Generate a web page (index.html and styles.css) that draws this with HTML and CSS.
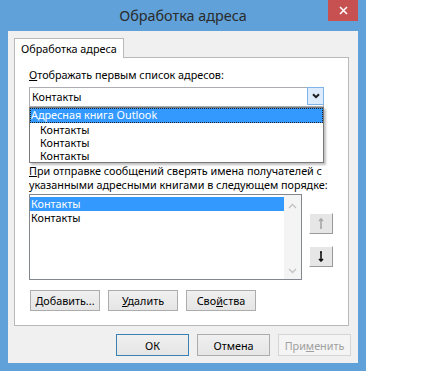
FILE: index.html
```html
<!DOCTYPE html>
<html lang="ru">
<head>
    <meta charset="UTF-8">
    <title>Обработка адреса</title>
    <link rel="stylesheet" href="styles.css">
</head>
<body>
    <div class="window">
        <div class="titlebar">
            <span></span>
            <div class="title">Обработка адреса</div>
            <button class="close" type="button">
                <svg width="9" height="9" viewBox="0 0 9 9"><path d="M1 1L8 8M8 1L1 8" stroke="#fff" stroke-width="1.6"/></svg>
            </button>
        </div>

        <div class="client">
            <div class="tabs">
                <div class="tab active">Обработка адреса</div>
            </div>

            <div class="panel">
                <div class="label"><u>О</u>тображать первым список адресов:</div>

                <div class="combo-wrap">
                    <div class="combo">
                        <span class="combo-text">Контакты</span>
                        <span class="combo-btn">
                            <svg width="8" height="6" viewBox="0 0 8 6"><path d="M1 1.2L4 4.2L7 1.2" fill="none" stroke="#1e1e1e" stroke-width="2"/></svg>
                        </span>
                    </div>
                    <ul class="dropdown">
                        <li class="group selected">Адресная книга Outlook</li>
                        <li>Контакты</li>
                        <li>Контакты</li>
                        <li>Контакты</li>
                    </ul>
                </div>

                <div class="text"><u>П</u>ри отправке сообщений сверять имена получателей с указанными адресными книгами в следующем порядке:</div>

                <div class="order">
                    <div class="listbox">
                        <ul class="items">
                            <li class="selected">Контакты</li>
                            <li>Контакты</li>
                        </ul>
                        <div class="scrollbar">
                            <svg width="9" height="6" viewBox="0 0 9 6"><path d="M1 5L4.5 1.5L8 5" fill="none" stroke="#c2c2c2" stroke-width="1.3"/></svg>
                            <svg width="9" height="6" viewBox="0 0 9 6"><path d="M1 1L4.5 4.5L8 1" fill="none" stroke="#c2c2c2" stroke-width="1.3"/></svg>
                        </div>
                    </div>
                    <div class="movers">
                        <button class="mover" type="button" disabled>
                            <svg width="8" height="11" viewBox="0 0 8 11"><path d="M4 1V10M2 3L4 1L6 3M3 10H5" fill="none" stroke="#a8a8a8" stroke-width="1.6"/></svg>
                        </button>
                        <button class="mover" type="button">
                            <svg width="8" height="11" viewBox="0 0 8 11"><path d="M4 1V10M3 1H5M2 8L4 10L6 8" fill="none" stroke="#111" stroke-width="1.6"/></svg>
                        </button>
                    </div>
                </div>

                <div class="actions">
                    <button class="btn" type="button"><u>Д</u>обавить...</button>
                    <button class="btn" type="button"><u>У</u>далить</button>
                    <button class="btn" type="button">Сво<u>й</u>ства</button>
                </div>
            </div>

            <div class="footer">
                <button class="btn btn-default" type="button">ОК</button>
                <button class="btn" type="button">Отмена</button>
                <button class="btn" type="button" disabled>При<u>м</u>енить</button>
            </div>
        </div>
    </div>
</body>
</html>
```

FILE: styles.css
```css
* {
    margin: 0;
    padding: 0;
    box-sizing: border-box;
}

body {
    background: #fff;
    font-family: 'Noto Sans', 'Open Sans', sans-serif;
    font-size: 10.8px;
    color: #000;
}

ul {
    list-style: none;
}

u {
    text-decoration: underline;
    text-underline-offset: 1px;
}

.window {
    width: 366px;
    height: 371px;
    background: #5fa1d8;
    padding: 0 8px 8px;
}

.titlebar {
    height: 31px;
    display: grid;
    grid-template-columns: 1fr auto 1fr;
    margin: 0 -8px;
    padding: 0 8px;
}

.title {
    align-self: center;
    font-size: 14.4px;
    color: #2b2b2b;
    padding-bottom: 1px;
}

.close {
    justify-self: end;
    align-self: start;
    width: 30px;
    height: 21px;
    border: none;
    background: #c75050;
    display: flex;
    align-items: center;
    justify-content: center;
}

.client {
    height: 332px;
    background: #f0f0f0;
    padding: 7px 0 0 6px;
}

.tabs {
    display: flex;
    position: relative;
    z-index: 1;
}

.tab {
    height: 20px;
    width: 110px;
    margin-bottom: -1px;
    padding: 1px 0 0 6px;
    border: 1px solid #b9b9b9;
    border-bottom: none;
    background: #fff;
    line-height: 17px;
    white-space: nowrap;
}

.panel {
    width: 335px;
    height: 269px;
    background: #fff;
    border: 1px solid #b9b9b9;
    padding: 10px 14px 0;
}

.label {
    line-height: 14px;
}

.combo-wrap {
    position: relative;
    margin-top: 5px;
    width: 295px;
}

.combo {
    height: 20px;
    border: 1px solid #abadb3;
    display: flex;
    align-items: stretch;
    background: #fff;
}

.combo-text {
    flex: 1;
    padding-left: 2px;
    line-height: 17px;
}

.combo-btn {
    width: 17px;
    margin: -1px -1px 1px 0;
    border: 1px solid #7eb4ea;
    background: #dcecfc;
    display: flex;
    align-items: center;
    justify-content: center;
}

.dropdown {
    position: absolute;
    top: 100%;
    left: 0;
    width: 295px;
    height: 56px;
    background: #fff;
    border: 1px solid #7a7a7a;
    box-shadow: 2px 2px 2px rgba(0, 0, 0, 0.25);
    z-index: 2;
}

.dropdown li {
    height: 13px;
    line-height: 13px;
    padding-left: 10px;
}

.dropdown .group {
    padding-left: 1px;
}

.dropdown .selected {
    background: #3399ff;
    color: #fff;
    outline: 1px dotted #222;
    outline-offset: -1px;
    height: 15px;
    line-height: 14px;
}

.text {
    margin-top: 57px;
    line-height: 14px;
}

.order {
    display: flex;
    gap: 7px;
    margin-top: 2px;
}

.listbox {
    width: 273px;
    height: 86px;
    border: 1px solid #828790;
    display: flex;
    background: #fff;
}

.items {
    flex: 1;
    padding-top: 2px;
}

.items li {
    height: 14px;
    line-height: 14px;
    padding-left: 1px;
}

.items .selected {
    background: #3399ff;
    color: #fff;
}

.scrollbar {
    width: 17px;
    background: #f4f4f4;
    display: flex;
    flex-direction: column;
    justify-content: space-between;
    align-items: center;
    padding: 8px 0 5px;
}

.movers {
    display: flex;
    flex-direction: column;
    gap: 12px;
    padding-top: 19px;
}

.mover {
    width: 24px;
    height: 21px;
    background: #e6e6e6;
    border: 1px solid;
    border-color: #fff #9a9a9a #9a9a9a #fff;
    display: flex;
    align-items: center;
    justify-content: center;
}

.actions {
    display: flex;
    gap: 8px;
    margin-top: 10px;
    padding-left: 1px;
}

.btn {
    width: 70px;
    height: 21px;
    font: inherit;
    color: #000;
    background: linear-gradient(#f0f0f0, #e5e5e5);
    border: 1px solid #acacac;
}

.btn:disabled {
    color: #a0a0a0;
    background: #f4f4f4;
    border-color: #d5d5d5;
}

.btn-default {
    border-color: #3c7fb1;
}

.footer {
    display: flex;
    justify-content: flex-end;
    gap: 8px;
    margin-top: 8px;
    padding-right: 7px;
}

.footer .btn {
    width: 73px;
    height: 22px;
}
```
